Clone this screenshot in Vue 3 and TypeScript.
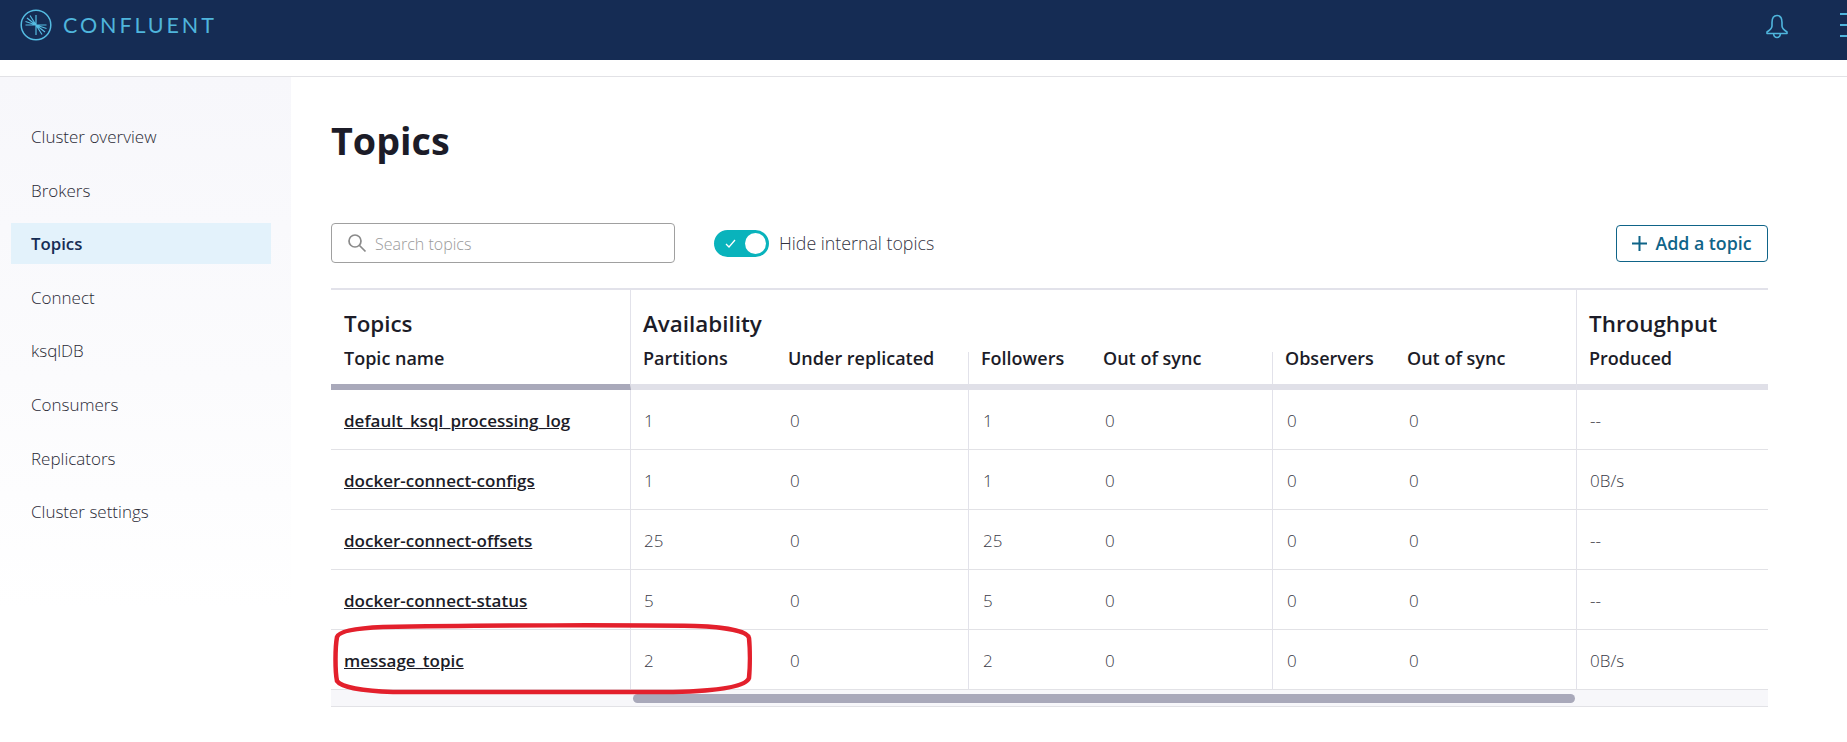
<template>
  <div class="page">
    <header class="topbar">
      <div class="brand">
        <svg class="brand__mark" width="32" height="32" viewBox="0 0 32 32" fill="none" stroke="#55bce2">
          <circle cx="16" cy="16" r="14.8" stroke-width="1.5" />
          <path
            d="M16 6V26M5.5 16H26.5M16 16L7 9M16 16L5.5 12.5M16 16L10 6.5M16 16L25 23M16 16L26.5 19.5M16 16L22 25.5"
            stroke-width="1.2"
          />
        </svg>
        <span class="brand__name">CONFLUENT</span>
      </div>
      <svg class="bell" width="24" height="26" viewBox="0 0 24 26" fill="none" stroke="#4fb5dc" stroke-width="1.6">
        <path d="M7 9.5C7 5 8.8 2.5 12 2.5S17 5 17 9.5V13C17 15.5 19 17 22 19V20.5H2V19C5 17 7 15.5 7 13Z" stroke-linejoin="round" />
        <path d="M8.5 20.5C8.8 23 10 24.5 12 24.5S15.2 23 15.5 20.5" />
      </svg>
      <div class="burger"><i></i><i></i><i></i></div>
    </header>

    <div class="body">
      <nav class="sidebar">
        <a
          v-for="item in navItems"
          :key="item"
          class="sidebar__item"
          :class="{ 'sidebar__item--active': item === 'Topics' }"
        >{{ item }}</a>
      </nav>

      <main class="content">
        <h1 class="content__title">Topics</h1>

        <div class="toolbar">
          <label class="search">
            <svg width="20" height="20" viewBox="0 0 20 20" fill="none" stroke="#8a8a8a" stroke-width="1.7">
              <circle cx="8" cy="8" r="6" />
              <path d="M12.5 12.5L18.5 18.5" />
            </svg>
            <span class="search__placeholder">Search topics</span>
          </label>
          <div class="switch">
            <span class="switch__track">
              <svg width="11" height="9" viewBox="0 0 11 9" fill="none" stroke="#fff" stroke-width="1.3">
                <path d="M1 5L4 8L10 1" />
              </svg>
              <span class="switch__thumb"></span>
            </span>
            <span class="switch__label">Hide internal topics</span>
          </div>
          <button class="add-btn" type="button">
            <svg width="15" height="15" viewBox="0 0 15 15" stroke="#0f6488" stroke-width="2">
              <path d="M7.5 0V15M0 7.5H15" />
            </svg>
            Add a topic
          </button>
        </div>

        <div class="table-wrap">
          <table class="topics">
            <colgroup>
              <col v-for="w in colWidths" :key="w.id" :style="{ width: w.px + 'px' }" />
            </colgroup>
            <thead>
              <tr class="topics__groups">
                <th class="sep topics__name">Topics</th>
                <th colspan="6" class="sep">Availability</th>
                <th>Throughput</th>
              </tr>
              <tr class="topics__cols">
                <th class="sep topics__first topics__name">Topic name</th>
                <th>Partitions</th>
                <th class="subsep">Under replicated</th>
                <th>Followers</th>
                <th class="subsep">Out of sync</th>
                <th>Observers</th>
                <th class="sep">Out of sync</th>
                <th>Produced</th>
              </tr>
            </thead>
            <tbody>
              <tr v-for="row in rows" :key="row.name">
                <td class="sep topics__name"><a class="topics__link">{{ row.name }}</a></td>
                <td>{{ row.partitions }}</td>
                <td class="sep">0</td>
                <td>{{ row.partitions }}</td>
                <td class="sep">0</td>
                <td>0</td>
                <td class="sep">0</td>
                <td>{{ row.produced }}</td>
              </tr>
            </tbody>
          </table>
          <div class="scroll">
            <span class="scroll__thumb"></span>
          </div>

          <!-- red hand-drawn marker around the last row -->
          <svg class="marker" width="424" height="72" viewBox="0 0 424 72" fill="none">
            <path
              d="M50 4C150 2 300 2 362 3C392 4 415 8 416 15C417 25 417 45 416 55C413 64 382 68 340 69H60C30 68 8 64 4 58C2 48 2 25 4 14C6 8 25 5 50 4Z"
              stroke="#e3202c"
              stroke-width="4.5"
            />
          </svg>
        </div>
      </main>
    </div>
  </div>
</template>

<script setup lang="ts">
interface TopicRow {
  name: string
  partitions: number
  produced: string
}

const navItems: string[] = [
  'Cluster overview',
  'Brokers',
  'Topics',
  'Connect',
  'ksqlDB',
  'Consumers',
  'Replicators',
  'Cluster settings'
]

const colWidths = [
  { id: 'name', px: 300 },
  { id: 'partitions', px: 145 },
  { id: 'under', px: 193 },
  { id: 'followers', px: 122 },
  { id: 'fsync', px: 182 },
  { id: 'observers', px: 122 },
  { id: 'osync', px: 182 },
  { id: 'produced', px: 191 }
]

const rows: TopicRow[] = [
  { name: 'default_ksql_processing_log', partitions: 1, produced: '--' },
  { name: 'docker-connect-configs', partitions: 1, produced: '0B/s' },
  { name: 'docker-connect-offsets', partitions: 25, produced: '--' },
  { name: 'docker-connect-status', partitions: 5, produced: '--' },
  { name: 'message_topic', partitions: 2, produced: '0B/s' }
]
</script>

<style>
html,
body {
  margin: 0;
  background: #fff;
  overflow: hidden;
}
</style>

<style scoped>
.page {
  width: 1847px;
  height: 742px;
  overflow: hidden;
  font-family: "Open Sans", "Noto Sans", sans-serif;
  color: #1c1c28;
}

.topbar {
  height: 60px;
  background: #152c54;
  display: flex;
  align-items: center;
  padding-left: 20px;
  margin-bottom: 16px;
  overflow: hidden;
}

.brand {
  display: flex;
  align-items: center;
  gap: 11px;
  margin-top: -11px;
}

.brand__name {
  font-family: Lato, sans-serif;
  font-weight: 400;
  font-size: 21.5px;
  letter-spacing: 2.9px;
  color: #4fb5dc;
}

.bell {
  margin-left: auto;
  margin-right: 51px;
  margin-top: -8px;
}

.burger {
  width: 7px;
  margin-top: -10px;
  display: flex;
  flex-direction: column;
  gap: 9px;
  flex-shrink: 0;
}

.burger i {
  display: block;
  height: 2px;
  background: #4fb5dc;
}

.body {
  display: flex;
  height: 666px;
  border-top: 1px solid #e2e2e6;
}

.sidebar {
  width: 291px;
  flex-shrink: 0;
  padding: 39px 20px 0 11px;
  box-sizing: border-box;
  background: linear-gradient(180deg, #f7f7fb 0%, #fbfbfd 45%, #fff 80%);
  display: flex;
  flex-direction: column;
  gap: 12.6px;
}

.sidebar__item {
  height: 41px;
  line-height: 41px;
  padding-left: 20px;
  font-size: 17px;
  font-weight: 300;
  color: #2a2a36;
}

.sidebar__item--active {
  background: #e3f2fb;
  font-weight: 600;
  font-size: 16.8px;
  color: #152c54;
}

.content {
  flex: 1;
  padding: 0 79px 0 40px;
  min-width: 0;
}

.content__title {
  margin: 36px 0 0;
  font-size: 37.7px;
  line-height: 56px;
  font-weight: 700;
  color: #1c1c28;
}

.toolbar {
  display: flex;
  align-items: center;
  margin-top: 54px;
  height: 40px;
}

.search {
  width: 344px;
  height: 40px;
  box-sizing: border-box;
  border: 1px solid #a0a0a0;
  border-radius: 4px;
  display: flex;
  align-items: center;
  gap: 8px;
  padding-left: 15px;
}

.search__placeholder {
  font-size: 16px;
  font-weight: 300;
  color: #9a9a9a;
  padding-top: 2px;
}

.switch {
  display: flex;
  align-items: center;
  gap: 10px;
  margin-left: 39px;
}

.switch__track {
  position: relative;
  width: 55px;
  height: 27px;
  background: #09b3bc;
  border-radius: 14px;
  display: flex;
  align-items: center;
  padding-left: 11px;
  box-sizing: border-box;
}

.switch__thumb {
  position: absolute;
  right: 3px;
  top: 3px;
  width: 21px;
  height: 21px;
  border-radius: 50%;
  background: #fff;
}

.switch__label {
  font-size: 17.8px;
  font-weight: 300;
  color: #33333f;
}

.add-btn {
  margin-left: auto;
  width: 152px;
  height: 37px;
  box-sizing: border-box;
  border: 1px solid #0f6488;
  border-radius: 4px;
  background: #fff;
  color: #0f6488;
  font-family: inherit;
  font-size: 17.8px;
  font-weight: 600;
  display: flex;
  align-items: center;
  justify-content: center;
  gap: 8px;
  padding: 0;
}

.table-wrap {
  position: relative;
  margin-top: 25px;
  width: 1437px;
}

.topics {
  width: 1437px;
  table-layout: fixed;
  border-collapse: separate;
  border-spacing: 0;
  border-top: 2px solid #e2e2ea;
}

.topics th {
  text-align: left;
  padding: 0 0 0 12px;
  color: #1c1c28;
  white-space: nowrap;
}

.topics__groups th {
  height: 56px;
  box-sizing: border-box;
  padding-top: 10px;
  font-size: 22.4px;
  font-weight: 600;
}

.topics__cols th {
  height: 44px;
  box-sizing: border-box;
  padding-bottom: 14px;
  font-size: 18px;
  font-weight: 600;
  border-bottom: 6px solid #e0e0e8;
}

.topics__cols th.topics__first {
  border-bottom-color: #a9a9ba;
}

.topics .topics__name {
  padding-left: 13px;
}

.sep {
  border-right: 1px solid #e2e2ea;
}

/* divider inside the Availability group stops short of the group title */
.topics__cols .subsep {
  position: relative;
}

.topics__cols .subsep::after {
  content: "";
  position: absolute;
  right: 0;
  top: 6px;
  bottom: 0;
  width: 1px;
  background: #e2e2ea;
}

.topics td {
  height: 60px;
  box-sizing: border-box;
  padding: 2px 0 0 14px;
  font-size: 17px;
  font-weight: 300;
  color: #3a3a46;
  border-bottom: 1px solid #e2e2e6;
}

.topics td:nth-child(2),
.topics td:last-child {
  padding-left: 13px;
}

.topics td.topics__name {
  padding-left: 13px;
}

.topics__link {
  font-size: 17px;
  font-weight: 600;
  color: #1c1c28;
  text-decoration: underline;
}

.scroll {
  position: relative;
  height: 17px;
  background: #f7f7fa;
  border-bottom: 1px solid #e2e2e6;
  box-sizing: border-box;
}

.scroll__thumb {
  position: absolute;
  left: 302px;
  right: 193px;
  top: 4px;
  height: 9px;
  border-radius: 5px;
  background: #a9a9ba;
}

.marker {
  position: absolute;
  left: 2px;
  top: 335px;
  pointer-events: none;
}
</style>
